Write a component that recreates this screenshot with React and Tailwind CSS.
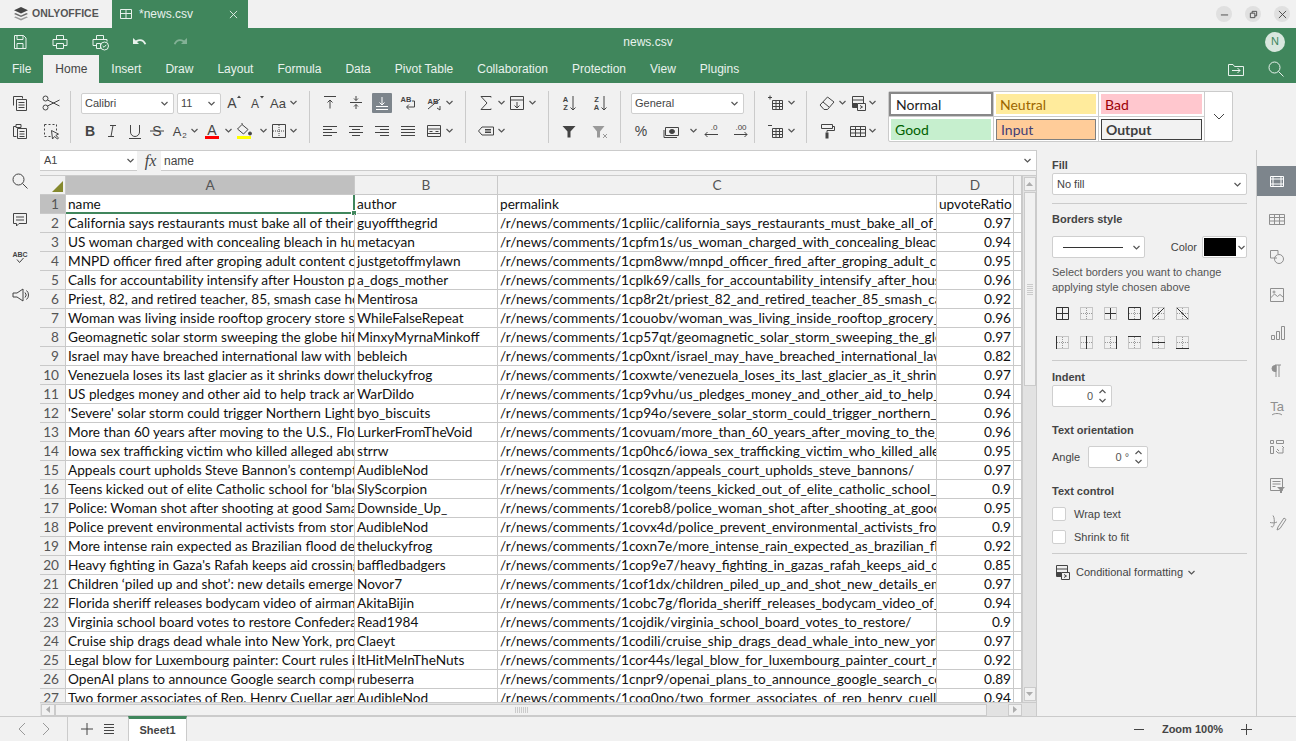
import React from "react";

const SANS = "font-['Liberation_Sans',Arial,sans-serif]";
const CELL = "font-['Lato',sans-serif]";

const tabs = ["File", "Home", "Insert", "Draw", "Layout", "Formula", "Data", "Pivot Table", "Collaboration", "Protection", "View", "Plugins"];

const rows = [
  ["name", "author", "permalink", "upvoteRatio"],
  ["California says restaurants must bake all of their bread", "guyoffthegrid", "/r/news/comments/1cpliic/california_says_restaurants_must_bake_all_of_their", "0.97"],
  ["US woman charged with concealing bleach in husband's", "metacyan", "/r/news/comments/1cpfm1s/us_woman_charged_with_concealing_bleach_in", "0.94"],
  ["MNPD officer fired after groping adult content creator", "justgetoffmylawn", "/r/news/comments/1cpm8ww/mnpd_officer_fired_after_groping_adult_content", "0.95"],
  ["Calls for accountability intensify after Houston police", "a_dogs_mother", "/r/news/comments/1cplk69/calls_for_accountability_intensify_after_houston", "0.96"],
  ["Priest, 82, and retired teacher, 85, smash case holding", "Mentirosa", "/r/news/comments/1cp8r2t/priest_82_and_retired_teacher_85_smash_case", "0.92"],
  ["Woman was living inside rooftop grocery store sign", "WhileFalseRepeat", "/r/news/comments/1couobv/woman_was_living_inside_rooftop_grocery_store", "0.96"],
  ["Geomagnetic solar storm sweeping the globe hits", "MinxyMyrnaMinkoff", "/r/news/comments/1cp57qt/geomagnetic_solar_storm_sweeping_the_globe", "0.97"],
  ["Israel may have breached international law with", "bebleich", "/r/news/comments/1cp0xnt/israel_may_have_breached_international_law", "0.82"],
  ["Venezuela loses its last glacier as it shrinks down", "theluckyfrog", "/r/news/comments/1coxwte/venezuela_loses_its_last_glacier_as_it_shrinks", "0.97"],
  ["US pledges money and other aid to help track and", "WarDildo", "/r/news/comments/1cp9vhu/us_pledges_money_and_other_aid_to_help_track", "0.94"],
  ["'Severe' solar storm could trigger Northern Lights", "byo_biscuits", "/r/news/comments/1cp94o/severe_solar_storm_could_trigger_northern_lights", "0.96"],
  ["More than 60 years after moving to the U.S., Florida", "LurkerFromTheVoid", "/r/news/comments/1covuam/more_than_60_years_after_moving_to_the_us", "0.96"],
  ["Iowa sex trafficking victim who killed alleged abuser", "strrw", "/r/news/comments/1cp0hc6/iowa_sex_trafficking_victim_who_killed_alleged", "0.95"],
  ["Appeals court upholds Steve Bannon’s contempt", "AudibleNod", "/r/news/comments/1cosqzn/appeals_court_upholds_steve_bannons/", "0.97"],
  ["Teens kicked out of elite Catholic school for ‘black", "SlyScorpion", "/r/news/comments/1colgom/teens_kicked_out_of_elite_catholic_school_for", "0.9"],
  ["Police: Woman shot after shooting at good Samaritan", "Downside_Up_", "/r/news/comments/1coreb8/police_woman_shot_after_shooting_at_good", "0.95"],
  ["Police prevent environmental activists from storming", "AudibleNod", "/r/news/comments/1covx4d/police_prevent_environmental_activists_from", "0.9"],
  ["More intense rain expected as Brazilian flood death", "theluckyfrog", "/r/news/comments/1coxn7e/more_intense_rain_expected_as_brazilian_flood", "0.92"],
  ["Heavy fighting in Gaza's Rafah keeps aid crossing", "baffledbadgers", "/r/news/comments/1cop9e7/heavy_fighting_in_gazas_rafah_keeps_aid_crossing", "0.85"],
  ["Children ‘piled up and shot’: new details emerge", "Novor7", "/r/news/comments/1cof1dx/children_piled_up_and_shot_new_details_emerge", "0.97"],
  ["Florida sheriff releases bodycam video of airman", "AkitaBijin", "/r/news/comments/1cobc7g/florida_sheriff_releases_bodycam_video_of_airman", "0.94"],
  ["Virginia school board votes to restore Confederate", "Read1984", "/r/news/comments/1cojdik/virginia_school_board_votes_to_restore/", "0.9"],
  ["Cruise ship drags dead whale into New York, probe", "Claeyt", "/r/news/comments/1codili/cruise_ship_drags_dead_whale_into_new_york", "0.97"],
  ["Legal blow for Luxembourg painter: Court rules in", "ItHitMeInTheNuts", "/r/news/comments/1cor44s/legal_blow_for_luxembourg_painter_court_rules", "0.92"],
  ["OpenAI plans to announce Google search competitor", "rubeserra", "/r/news/comments/1cnpr9/openai_plans_to_announce_google_search_competitor", "0.89"],
  ["Two former associates of Rep. Henry Cuellar agree", "AudibleNod", "/r/news/comments/1coq0no/two_former_associates_of_rep_henry_cuellar", "0.94"],
];

function Ic({ children, className = "" }) {
  return (
    <svg viewBox="0 0 20 20" fill="none" stroke="currentColor" strokeWidth="1" className={"w-5 h-5 shrink-0 " + className}>
      {children}
    </svg>
  );
}

function Chev({ className = "" }) {
  return (
    <svg viewBox="0 0 7 5" fill="none" stroke="currentColor" strokeWidth="1.2" className={"w-[7px] h-[5px] shrink-0 text-[#555] " + className}>
      <path d="M.5 1l3 3 3-3" />
    </svg>
  );
}

// fixed-width toolbar slot, icon centred in it
function S({ w, children }) {
  return <div className={"flex h-5 items-center justify-center shrink-0 " + w}>{children}</div>;
}

function IconText({ x = 10, y = 14, size = 11, weight = "400", children, fill = "currentColor" }) {
  return (
    <text x={x} y={y} fontSize={size} fontWeight={weight} textAnchor="middle" fill={fill} stroke="none" fontFamily="Liberation Sans, Arial, sans-serif">
      {children}
    </text>
  );
}

function Lines({ kind }) {
  const d = {
    top: "M4 3.500h12M10 15.500V7M7.500 9.500L10 7l2.500 2.500",
    mid: "M4 9.500h12M10 3v4.500M8 5.500l2 2 2-2M10 16v-4.500M8 13.500l2-2 2 2",
    left: "M3 5.500h14M3 8.500h9M3 11.500h14M3 14.500h9",
    center: "M3 5.500h14M6 8.500h8M3 11.500h14M6 14.500h8",
    right: "M3 5.500h14M8 8.500h9M3 11.500h14M8 14.500h9",
    just: "M3 5.500h14M3 8.500h14M3 11.500h14M3 14.500h14",
  }[kind];
  return (
    <Ic>
      <path d={d} />
    </Ic>
  );
}

function Sep() {
  return <div className="w-px h-[52px] bg-[#cbcbcb] self-center shrink-0" />;
}

function Combo({ className, text, chevClass = "" }) {
  return (
    <div className={"flex items-center justify-between bg-white border border-[#cfcfcf] rounded-[2px] text-[11px] text-[#444] pl-[3px] pr-[5px] shrink-0 " + className}>
      <span>{text}</span>
      <Chev className={chevClass} />
    </div>
  );
}

function Row({ className = "", children }) {
  return <div className={"flex items-center h-5 " + className}>{children}</div>;
}

function Group({ w, children }) {
  return <div className={"flex flex-col justify-between h-[48px] shrink-0 self-center " + w}>{children}</div>;
}

function TitleBar() {
  return (
    <div className={"flex h-7 bg-[#f1f1f1] shrink-0 " + SANS}>
      <div className="flex items-center w-[112px] pl-[13px] gap-[3px] text-[#555]">
        <svg viewBox="0 0 16 16" className="w-4 h-4">
          <path d="M8 1l7 3.200L8 7.400 1 4.200z" fill="#444" />
          <path d="M2.600 7L8 9.500 13.400 7 15 7.900 8 11 1 7.900z" fill="#6d6d6d" />
          <path d="M2.600 10.400L8 12.800l5.400-2.400 1.600.9L8 14.500l-7-3.200z" fill="#9a9a9a" />
        </svg>
        <span className="text-[10.5px] font-bold text-[#555]">ONLYOFFICE</span>
      </div>
      <div className="flex items-center w-[136px] bg-[#40865c] text-[#e8f1ec]">
        <svg viewBox="0 0 12 10" fill="none" stroke="currentColor" className="w-3 h-[10px] ml-[8px]">
          <path d="M.5.500h11v9H.5zM.5 4.500h11M6 .5v9" />
        </svg>
        <span className="text-[12px] ml-[7px]">*news.csv</span>
        <svg viewBox="0 0 10 10" fill="none" stroke="currentColor" className="w-[9px] h-[9px] ml-[36px]">
          <path d="M1 1l8 8M9 1l-8 8" />
        </svg>
      </div>
      <div className="flex flex-1 items-center justify-end gap-[13px] pr-[6px]">
        {["min", "max", "close"].map((k) => (
          <div key={k} className="flex items-center justify-center w-4 h-4 rounded-full bg-[#e0e0e0] text-[#444]">
            <svg viewBox="0 0 10 10" fill="none" stroke="currentColor" className="w-[9px] h-[9px]">
              {k === "min" && <path d="M1 5.500h8" />}
              {k === "max" && <path d="M1.500 3.500h5v5h-5zM3.500 3.500v-2h5v5h-2" />}
              {k === "close" && <path d="M1 1l8 8M9 1l-8 8" />}
            </svg>
          </div>
        ))}
      </div>
    </div>
  );
}

function GreenHeader() {
  return (
    <div className={"h-[55px] bg-[#40865c] shrink-0 text-white " + SANS}>
      <div className="grid grid-cols-[1fr_auto_1fr] items-center h-[27px]">
        <div className="flex text-[#e9f2ed]">
          <S w="w-10">
            <Ic><path d="M4.500 3.500h9l2.500 2.500v10.500H4.500zM7 3.500v4h6v-4M7 16.500v-5h6v5" /></Ic>
          </S>
          <S w="w-10">
            <Ic><path d="M6.500 7V3.500h7V7M6.500 13.500H3V7.500h14v6h-3.500M6.500 11.500h7v5h-7z" /></Ic>
          </S>
          <S w="w-10">
            <Ic>
              <path d="M6.500 7V3.500h7V7M6.500 13.500H3V7.500h14v2M6.500 11.500h4v5h-4z" />
              <circle cx="14.500" cy="14" r="4" />
              <path d="M12.700 14l1.300 1.300 2.300-2.500" />
            </Ic>
          </S>
          <S w="w-10">
            <Ic><path d="M3 6v6h6L7 10c2.800-1.800 6-1 7.500 2.500l1.700-.6C14.500 7.200 10.200 5.800 5.800 8.500z" fill="currentColor" stroke="none" /></Ic>
          </S>
          <S w="w-10">
            <Ic className="opacity-40"><path d="M17 6v6h-6l2-2c-2.800-1.800-6-1-7.500 2.500l-1.700-.6C5.500 7.200 9.800 5.800 14.200 8.500z" fill="currentColor" stroke="none" /></Ic>
          </S>
        </div>
        <div className="text-[12px] text-[#e9f2ed]">news.csv</div>
        <div className="flex justify-end pr-[11px]">
          <div className="flex items-center justify-center w-5 h-5 rounded-full bg-[#d9e7de] text-[#40865c] text-[11px]">N</div>
        </div>
      </div>
      <div className="flex h-7 items-end">
        {tabs.map((t) =>
          t === "Home" ? (
            <div key={t} className="flex items-center h-[28px] px-3 bg-[#f1f1f1] text-[#444] text-[12px]">{t}</div>
          ) : (
            <div key={t} className="flex items-center h-[28px] px-3 text-[#e9f2ed] text-[12px]">{t}</div>
          )
        )}
        <div className="flex flex-1 justify-end items-center h-[28px] text-[#e9f2ed]">
          <S w="w-10">
            <Ic><path d="M2.500 5.500v11h15v-9h-9L7 5.500zM6 11.500h8M11.500 9l2.500 2.500-2.500 2.500" /></Ic>
          </S>
          <S w="w-10">
            <Ic><circle cx="8.500" cy="8.500" r="5.500" /><path d="M12.500 12.500l5 5" /></Ic>
          </S>
        </div>
      </div>
    </div>
  );
}

function Ribbon() {
  return (
    <div className={"flex h-[67px] bg-[#f1f1f1] shrink-0 text-[#444] " + SANS}>
      <Group w="w-[70px] pl-[10px]">
        <Row>
          <S w="w-5"><Ic><path d="M3.500 12.500v-9h9v2M6.500 6.500h10v11h-10zM8.500 9.500h6M8.500 12h6M8.500 14.500h6" /></Ic></S>
          <S w="w-[42px]"><Ic><circle cx="4.500" cy="5.500" r="2.500" /><circle cx="4.500" cy="14.500" r="2.500" /><path d="M6.500 7l12 6M6.500 13l12-6" /></Ic></S>
        </Row>
        <Row>
          <S w="w-5"><Ic><path d="M6 5.500H3.500v10h3M6 3.500h5v3H6zM7.500 7.500h9v10h-9zM9.500 10.500h5M9.500 13h5M9.500 15.500h5" /></Ic></S>
          <S w="w-[42px]"><Ic><path d="M3.500 3.500h12v6M3.500 3.500v12h6" strokeDasharray="2 2" /><path d="M10.500 9.500l1 8.500 2-2.500 3 2.500 1-1.200-2.700-2.400 2.700-1.300z" /></Ic></S>
        </Row>
      </Group>
      <Sep />
      <Group w="w-[238px] pl-[10px]">
        <Row>
          <Combo className="w-[93px] h-[21px] mt-[1px] pt-[1px]" text="Calibri" />
          <Combo className="w-[44px] h-[21px] mt-[1px] pt-[1px] ml-[3px]" text="11" />
          <S w="w-[23px]"><Ic><IconText x="9" y="15" size="14">A</IconText><path d="M14 5l2-2.500L18 5z" fill="currentColor" stroke="none" /></Ic></S>
          <S w="w-[23px]"><Ic><IconText x="9" y="15" size="12">A</IconText><path d="M14 3l2 2.500L18 3z" fill="currentColor" stroke="none" /></Ic></S>
          <S w="w-[22px]"><Ic><IconText x="10" y="15" size="13">Aa</IconText></Ic></S>
          <S w="w-[8px]"><Chev /></S>
        </Row>
        <Row>
          <S w="w-[18px]"><Ic><IconText x="10" y="15" size="14" weight="700">B</IconText></Ic></S>
          <S w="w-[26px]"><Ic><path d="M8 4.500h6M6 15.500h6M11 4.500l-2 11" /></Ic></S>
          <S w="w-[20px]"><Ic><path d="M5.500 4v7a4.500 4.500 0 0 0 9 0V4M4 17.500h12" /></Ic></S>
          <S w="w-[24px]"><Ic><IconText x="10" y="15" size="14">S</IconText><path d="M3 10h14" /></Ic></S>
          <S w="w-[20px]"><Ic><IconText x="8" y="15" size="13">A</IconText><IconText x="15.500" y="16.500" size="8">2</IconText></Ic></S>
          <S w="w-[11px]"><Chev /></S>
          <S w="w-[24px]">
            <svg viewBox="0 0 20 20" className="w-5 h-5 shrink-0">
              <IconText x="10" y="14" size="14">A</IconText>
              <rect x="3" y="15" width="14" height="3" fill="#f00" />
            </svg>
          </S>
          <S w="w-[8px]"><Chev /></S>
          <S w="w-[24px]">
            <svg viewBox="0 0 20 20" className="w-5 h-5 shrink-0" fill="none" stroke="currentColor">
              <path d="M8 3.500l6 5-4.500 4.500-6-5zM8 3.500V2" />
              <circle cx="16" cy="12.500" r="1.500" fill="currentColor" />
              <rect x="3" y="15" width="14" height="3" fill="#ff0" stroke="none" />
            </svg>
          </S>
          <S w="w-[14px]"><Chev /></S>
          <S w="w-[18px]"><Ic><path d="M3.500 3.500h13v13h-13z" /><path d="M10 4v12M4 10h12" strokeDasharray="1 1" /></Ic></S>
          <S w="w-[9px] ml-[1px]"><Chev /></S>
        </Row>
      </Group>
      <Sep />
      <Group w="w-[155px] pl-[10px]">
        <Row>
          <S w="w-5"><Lines kind="top" /></S>
          <S w="w-[32px]"><Lines kind="mid" /></S>
          <S w="w-[20px]">
            <div className="flex items-center justify-center w-5 h-5 bg-[#7d858c] text-white rounded-[1px]"><Ic><path d="M4 13.500h12M4 16.500h12M10 4v8M7.500 9.500l2.500 2.500 2.500-2.500" /></Ic></div>
          </S>
          <S w="w-[32px]"><Ic><IconText x="8" y="9" size="7.500" weight="700">AB</IconText><path d="M14 8h2.500v6H9M11 11.500L8.500 14l2.500 2.500" /></Ic></S>
          <S w="w-[20px]"><Ic><IconText x="9" y="11" size="7.500" weight="700">AB</IconText><path d="M4 16L16 6M13 15l3 2 0-4" /></Ic></S>
          <S w="w-[10px]"><Chev /></S>
        </Row>
        <Row>
          <S w="w-5"><Lines kind="left" /></S>
          <S w="w-[32px]"><Lines kind="center" /></S>
          <S w="w-[20px]"><Lines kind="right" /></S>
          <S w="w-[32px]"><Lines kind="just" /></S>
          <S w="w-[20px]"><Ic><path d="M3.500 4.500h13v11h-13zM3.500 8h13M3.500 12.500h13M5.500 10.500h3M11.500 10.500h3" /></Ic></S>
          <S w="w-[10px]"><Chev /></S>
        </Row>
      </Group>
      <Sep />
      <Group w="w-[82px] pl-[10px]">
        <Row>
          <S w="w-5"><Ic><path d="M15 4.500v-1H5l6 6.500-6 6.500h10v-1" /></Ic></S>
          <S w="w-[10px]"><Chev /></S>
          <S w="w-[22px]"><Ic><path d="M3.500 3.500h13v13h-13zM3.500 7h13M10 9v6M7.500 12.500l2.500 2.500 2.500-2.500" /></Ic></S>
          <S w="w-[8px]"><Chev /></S>
        </Row>
        <Row>
          <S w="w-5"><Ic><path d="M2.500 10L6 6h11.500v8H6zM9 8.500h6M9 10h6M9 11.500h6" /></Ic></S>
          <S w="w-[10px]"><Chev /></S>
        </Row>
      </Group>
      <Sep />
      <Group w="w-[71px] pl-[10px]">
        <Row>
          <S w="w-5"><Ic><IconText x="6.500" y="9" size="7.500" weight="700">A</IconText><IconText x="6.500" y="17" size="7.500" weight="700">Z</IconText><path d="M14 3v14M11.500 14.500L14 17l2.500-2.500" /></Ic></S>
          <S w="w-[42px]"><Ic><IconText x="6.500" y="9" size="7.500" weight="700">Z</IconText><IconText x="6.500" y="17" size="7.500" weight="700">A</IconText><path d="M14 3v14M11.500 14.500L14 17l2.500-2.500" /></Ic></S>
        </Row>
        <Row>
          <S w="w-5"><Ic><path d="M3.500 5h13l-5 5.500v6h-3v-6z" fill="currentColor" stroke="none" /></Ic></S>
          <S w="w-[42px]"><Ic className="text-[#9a9a9a]"><path d="M2.500 5h12L10 10.500v6H7v-6z" fill="currentColor" stroke="none" /><path d="M13 13l4 4M17 13l-4 4" /></Ic></S>
        </Row>
      </Group>
      <Sep />
      <Group w="w-[133px] pl-[10px]">
        <Row><Combo className="w-[113px] h-[21px] mt-[1px] pt-[1px]" text="General" /></Row>
        <Row>
          <S w="w-[20px]"><Ic><IconText x="10" y="15" size="14">%</IconText></Ic></S>
          <S w="w-[41px]"><Ic><path d="M3.500 6.500h13v8h-13zM2 9v7.500h13" /><ellipse cx="10" cy="10.500" rx="2.500" ry="2" fill="currentColor" /></Ic></S>
          <S w="w-[2px]"><Chev /></S>
          <S w="w-[31px] ml-[1px]"><Ic><IconText x="13" y="9" size="8">.0</IconText><path d="M17 13.500H4M6.500 11L4 13.500 6.500 16" /></Ic></S>
          <S w="w-[30px]"><Ic><IconText x="10" y="9" size="8">.00</IconText><path d="M3 13.500h13M13.500 11l2.500 2.500-2.500 2.500" /></Ic></S>
        </Row>
      </Group>
      <Sep />
      <Group w="w-[51px] pl-[11px]">
        <Row>
          <S w="w-5"><Ic><path d="M6.500 7.500h10v9h-10zM6.500 10.500h10M6.500 13.500h10M10 7.500v9M13.500 7.500v9M2 4.500h4M4 2.500v4" /></Ic></S>
          <S w="w-[10px]"><Chev /></S>
        </Row>
        <Row>
          <S w="w-5"><Ic><path d="M6.500 7.500h10v9h-10zM6.500 10.500h10M6.500 13.500h10M10 7.500v9M13.500 7.500v9M2 4.500h4" /></Ic></S>
          <S w="w-[10px]"><Chev /></S>
        </Row>
      </Group>
      <Sep />
      <Group w="w-[82px] pl-[10px]">
        <Row>
          <S w="w-5"><Ic><path d="M3 12l7.500-8 6.500 5-6.500 7.500H7zM6 9l6 5" /></Ic></S>
          <S w="w-[10px]"><Chev /></S>
          <S w="w-[21px]"><Ic><path d="M4.500 3.500h11v11h-11zM4.500 7h11M4.500 10.500h5" /><rect x="5" y="11" width="5" height="3" fill="currentColor" stroke="none" /><path d="M9.500 10.500h8v7h-8zM12 12.500l2.500 1.500-2.500 1.500" fill="#f1f1f1" /></Ic></S>
          <S w="w-[9px]"><Chev /></S>
        </Row>
        <Row>
          <S w="w-5"><Ic><path d="M4.500 3.500h11v4h-11zM15.500 5.500h2v4H10v2" /><rect x="8.500" y="11.500" width="3" height="6" fill="currentColor" stroke="none" /></Ic></S>
          <div className="w-[10px] shrink-0" />
          <S w="w-[21px]"><Ic><path d="M2.500 5.500h15v10h-15zM2.500 8.500h15M2.500 12h15M7.500 5.500v10M12.500 5.500v10" /></Ic></S>
          <S w="w-[9px]"><Chev /></S>
        </Row>
      </Group>
      <StyleGallery />
    </div>
  );
}

function StyleGallery() {
  const base = "flex items-center pl-[4px] text-[14px] " + CELL;
  return (
    <div className="flex self-center ml-[-1px] h-[51px] w-[345px] bg-white border border-[#cbcbcb] rounded-[2px] shrink-0">
      <div className="grid grid-cols-[105px_105px_105px] grid-rows-[25px_25px] border-r border-[#cbcbcb]">
        <div className="border-r border-b border-[#cbcbcb]"><div className={"h-full border-2 border-[#888] text-[#222] pl-[5px] " + base}>Normal</div></div>
        <div className="border-r border-b border-[#cbcbcb] p-[2px]"><div className={"h-full bg-[#ffeb9c] text-[#9c6500] " + base}>Neutral</div></div>
        <div className="border-b border-[#cbcbcb] p-[2px]"><div className={"h-full bg-[#ffc7ce] text-[#9c0006] " + base}>Bad</div></div>
        <div className="border-r border-[#cbcbcb] p-[2px]"><div className={"h-full bg-[#c6efce] text-[#006100] " + base}>Good</div></div>
        <div className="border-r border-[#cbcbcb] p-[2px]"><div className={"h-full bg-[#ffcc99] border border-[#7f7f7f] text-[#3f3f76] " + base}>Input</div></div>
        <div className="p-[2px]"><div className={"h-full bg-[#f2f2f2] border border-[#3f3f3f] text-[#3f3f3f] font-bold " + base}>Output</div></div>
      </div>
      <div className="flex flex-1 items-center justify-center text-[#444]">
        <svg viewBox="0 0 12 7" fill="none" stroke="currentColor" className="w-3 h-[7px]"><path d="M1 1l5 5 5-5" /></svg>
      </div>
    </div>
  );
}

function LeftBar() {
  return (
    <div className="flex flex-col items-center w-10 pt-[21px] gap-[18px] bg-[#f1f1f1] text-[#444] shrink-0">
      <Ic><circle cx="8.500" cy="8.500" r="5.500" /><path d="M12.500 12.500l5 5" /></Ic>
      <Ic><path d="M3.500 4.500h13v10H9L6.500 17v-2.500h-3zM6 8h8M6 11h8" /></Ic>
      <Ic><IconText x="10" y="10" size="7" weight="700">ABC</IconText><path d="M7 12.500l2.500 3 4-4.500" /></Ic>
      <Ic><path d="M3 8h4l6-4v12l-6-4H3zM15 7.500a3.500 3.500 0 0 1 0 5M16.500 5.500a6 6 0 0 1 0 9" /></Ic>
    </div>
  );
}

function FormulaBar() {
  return (
    <div className={"flex h-[21px] bg-[#f1f1f1] border-t border-[#cbcbcb] shrink-0 " + SANS}>
      <div className="flex items-center justify-between w-[97px] bg-white border-b border-[#cbcbcb] pl-[4px] pr-[3px] text-[11px] text-[#444]">
        <span>A1</span>
        <Chev />
      </div>
      <div className="flex items-center justify-center w-[21px] ml-[3px] font-['Liberation_Serif',serif] italic text-[16px] text-[#444]">fx</div>
      <div className="flex flex-1 items-center justify-between bg-white border-b border-[#cbcbcb] pl-[3px] pr-[5px] text-[11px] text-[#444]">
        <span className="text-[12px]">name</span>
        <Chev />
      </div>
    </div>
  );
}

function Grid() {
  const cols = [
    { label: "A", w: "w-[289px]", active: true },
    { label: "B", w: "w-[143px]" },
    { label: "C", w: "w-[439px]" },
    { label: "D", w: "w-[77px]" },
    { label: "", w: "w-[8px]" },
  ];
  const border = "border-r border-b border-[#c9c9c9]";
  return (
    <div className={"flex-1 min-w-0 overflow-hidden bg-white text-[13.65px] text-[#111] " + CELL}>
      <div className="flex h-[19px]">
        <div className={"flex items-end justify-end w-[26px] pr-[2px] pb-[2px] bg-[#f1f1f1] shrink-0 " + border}>
          <svg viewBox="0 0 11 11" className="w-[11px] h-[11px]"><path d="M11 0v11H0z" fill="#85892e" /></svg>
        </div>
        {cols.map((c) => (
          <div key={c.label} className={"flex items-center justify-center shrink-0 text-[#555] " + c.w + " " + border + " " + (c.active ? "bg-[#c0c0c0]" : "bg-[#f1f1f1]")}>
            {c.label}
          </div>
        ))}
      </div>
      {rows.map((r, i) => (
        <div key={i} className="flex h-[19px]">
          <div className={"flex items-center justify-end w-[26px] pr-[6px] shrink-0 text-[#555] " + border + " " + (i === 0 ? "bg-[#c0c0c0]" : "bg-[#f1f1f1]")}>
            {i + 1}
          </div>
          <div className={"relative w-[289px] shrink-0 " + (i === 0 ? "border-r-2 border-b-2 border-[#40865c]" : border)}>
            <div className="h-full overflow-hidden whitespace-nowrap pl-[2px] leading-[18px]">{r[0]}</div>
            {i === 0 && <div className="absolute right-[-4px] bottom-[-4px] w-[6px] h-[6px] bg-[#40865c] border border-white" />}
          </div>
          <div className={"w-[143px] shrink-0 overflow-hidden whitespace-nowrap pl-[2px] leading-[18px] " + border}>{r[1]}</div>
          <div className={"w-[439px] shrink-0 overflow-hidden whitespace-nowrap pl-[2px] leading-[18px] " + border}>{r[2]}</div>
          <div className={"w-[77px] shrink-0 overflow-hidden whitespace-nowrap px-[2px] leading-[18px] " + (i > 0 ? "text-right " : "") + border}>{r[3]}</div>
          <div className={"w-[8px] shrink-0 " + border} />
        </div>
      ))}
    </div>
  );
}

function ScrollV() {
  return (
    <div className="flex flex-col items-center w-[14px] shrink-0 bg-[#e2e2e2] border-l border-[#cbcbcb]">
      <div className="flex items-center justify-center w-[12px] h-[14px] border border-[#cbcbcb] bg-[#f1f1f1] mt-[1px]">
        <svg viewBox="0 0 7 4" className="w-[7px] h-1"><path d="M3.500 0L7 4H0z" fill="#adadad" /></svg>
      </div>
      <div className="flex flex-col items-center justify-center gap-[1px] w-[12px] h-[194px] mt-[1px] border border-[#cbcbcb] bg-[#f1f1f1]">
        {[0, 1, 2, 3, 4, 5].map((i) => <div key={i} className="w-[6px] h-px bg-[#cbcbcb]" />)}
      </div>
      <div className="flex-1" />
      <div className="flex items-center justify-center w-[12px] h-[14px] border border-[#cbcbcb] bg-[#f1f1f1] mb-[1px]">
        <svg viewBox="0 0 7 4" className="w-[7px] h-1"><path d="M3.500 4L7 0H0z" fill="#adadad" /></svg>
      </div>
    </div>
  );
}

function ScrollH() {
  return (
    <div className="flex items-center h-[14px] bg-[#e2e2e2] border-t border-[#cbcbcb] shrink-0 pl-[1px]">
      <div className="flex items-center justify-center w-[14px] h-[12px] border border-[#cbcbcb] bg-[#f1f1f1]">
        <svg viewBox="0 0 4 7" className="w-1 h-[7px]"><path d="M0 3.500L4 0v7z" fill="#adadad" /></svg>
      </div>
      <div className="flex items-center justify-center gap-[1px] w-[932px] h-[12px] border border-[#cbcbcb] bg-[#f1f1f1]">
        {[0, 1, 2, 3, 4, 5, 6].map((i) => <div key={i} className="w-px h-[6px] bg-[#cbcbcb]" />)}
      </div>
      <div className="flex-1" />
      <div className="flex items-center justify-center w-[14px] h-[12px] mr-[14px] border border-[#cbcbcb] bg-[#f1f1f1]">
        <svg viewBox="0 0 4 7" className="w-1 h-[7px]"><path d="M4 3.500L0 0v7z" fill="#adadad" /></svg>
      </div>
    </div>
  );
}

// small 13px border picker: dotted grid with the solid sides drawn over it
function BorderIcon({ solid }) {
  return (
    <svg viewBox="0 0 13 13" fill="none" className="w-[13px] h-[13px] shrink-0">
      <path d="M.5.500h12v12H.5zM6.500 1v11M1 6.500h11" stroke="#9a9a9a" strokeDasharray="1 1" />
      <path d={solid} stroke="#333" />
    </svg>
  );
}

const borderIcons = [
  ["M.5.500h12v12H.5zM6.500 1v11M1 6.500h11", "", "M6.500 1v11M1 6.500h11", "M.5.500h12v12H.5z", "M1 12L12 1", "M1 1l11 11"],
  ["M.5 0v13", "M6.500 0v13", "M12.500 0v13", "M0 .5h13", "M0 6.500h13", "M0 12.500h13"],
];

function Divider({ className = "" }) {
  return <div className={"h-px bg-[#cbcbcb] " + className} />;
}

function Spin({ w, value }) {
  return (
    <div className={"flex items-center justify-end bg-white border border-[#cfcfcf] rounded-[2px] h-[22px] text-[11px] text-[#555] pr-[5px] gap-[6px] " + w}>
      <span>{value}</span>
      <div className="flex flex-col gap-[4px]">
        <Chev className="rotate-180" />
        <Chev />
      </div>
    </div>
  );
}

function RightPanel() {
  return (
    <div className={"w-[220px] shrink-0 bg-[#f1f1f1] border-l border-[#cbcbcb] pl-[15px] pr-[9px] text-[11px] text-[#444] " + SANS}>
      <div className="mt-[8px] h-[14px] leading-[14px] font-bold">Fill</div>
      <Combo className="h-[22px] mt-[1px] pl-[4px]" text="No fill" />
      <Divider className="mt-[8px]" />
      <div className="mt-[8px] h-[14px] leading-[14px] font-bold">Borders style</div>
      <div className="flex items-center justify-between mt-[10px]">
        <div className="flex items-center w-[93px] h-[22px] bg-white border border-[#cfcfcf] rounded-[2px] pl-[10px] gap-[10px]">
          <div className="w-[60px] h-px bg-[#333]" />
          <Chev />
        </div>
        <div className="flex items-center gap-[5px]">
          <span>Color</span>
          <div className="flex items-center w-[45px] h-[22px] bg-white border border-[#cfcfcf] rounded-[2px] pl-[1px] gap-[2px]">
            <div className="w-[32px] h-[18px] bg-black" />
            <Chev />
          </div>
        </div>
      </div>
      <p className="mt-[7px] leading-[15px] text-[#555]">
        Select borders you want to change
        <br />
        applying style chosen above
      </p>
      {borderIcons.map((line, i) => (
        <div key={i} className={"flex gap-[11px] pl-[4px] " + (i === 0 ? "mt-[12px]" : "mt-[16px]")}>
          {line.map((d, j) => <BorderIcon key={j} solid={d} />)}
        </div>
      ))}
      <Divider className="mt-[11px]" />
      <div className="mt-[9px] h-[14px] leading-[14px] font-bold">Indent</div>
      <Spin w="w-[60px] mt-[1px]" value="0" />
      <div className="mt-[16px] h-[14px] leading-[14px] font-bold">Text orientation</div>
      <div className="flex items-center mt-[9px] gap-[8px]">
        <span>Angle</span>
        <Spin w="w-[60px]" value="0 °" />
      </div>
      <div className="mt-[16px] h-[14px] leading-[14px] font-bold">Text control</div>
      <div className="flex items-center h-[14px] mt-[9px] gap-[8px]">
        <div className="w-[14px] h-[14px] bg-white border border-[#cfcfcf] rounded-[2px]" />
        <span>Wrap text</span>
      </div>
      <div className="flex items-center h-[14px] mt-[9px] gap-[8px]">
        <div className="w-[14px] h-[14px] bg-white border border-[#cfcfcf] rounded-[2px]" />
        <span>Shrink to fit</span>
      </div>
      <Divider className="mt-[9px]" />
      <div className="flex items-center mt-[8px] gap-[4px]">
        <Ic><path d="M4.500 3.500h11v11h-11zM4.500 7h11M4.500 10.500h5" /><rect x="5" y="11" width="5" height="3" fill="currentColor" stroke="none" /><path d="M9.500 10.500h8v7h-8zM12 12.500l2.500 1.500-2.500 1.500" fill="#f1f1f1" /></Ic>
        <span>Conditional formatting</span>
        <Chev className="ml-[1px]" />
      </div>
    </div>
  );
}

function IconBar() {
  const icons = [
    <><path d="M3.500 5.500h13v10h-13zM3.500 8h13M3.500 13h13M6 5.500v10M14 5.500v10" /></>,
    <><path d="M2.500 5.500h15v10h-15zM2.500 8.500h15M2.500 12h15M7.500 5.500v10M12.500 5.500v10" /></>,
    <><path d="M10 11H3.500V3.500H11V7" /><circle cx="12" cy="12" r="4.500" /></>,
    <><path d="M3.500 3.500h13v13h-13zM3.500 13l4-4 3 2.500 2.500-2 3 2.500" /><circle cx="7" cy="7" r="1" /></>,
    <><path d="M4.500 12.500h3v4h-3zM9.500 8.500h3v8h-3zM14.500 3.500h3v13h-3z" /></>,
    <><path d="M9 4v12M12 4v12M8 4h6" fill="none" /><path d="M9 4.500H8a3 3 0 0 0 0 6h1z" fill="currentColor" /></>,
    <><IconText x="10" y="12" size="13">Ta</IconText><path d="M5 16c2-2 8-2 10 0" /></>,
    <><path d="M3.500 3.500h3v3h-3zM9.500 3.500h7v3h-7zM3.500 9.500h3v7h-3zM9 14l2 2h5v-5M10 12l2 2M17 11l-2-2" /></>,
    <><path d="M3.500 3.500h12v12H9M3.500 3.500v12H9M5.500 6.500h8M5.500 9h8M5.500 11.500h3" /><path d="M10 12h8l-3 3v3h-2v-3z" fill="currentColor" stroke="none" /></>,
    <><path d="M6 2.500c1.500 2 1.500 6 1 9-.5 3-2.500 3-3 1.500M3 9.500c2 .5 5 .5 7-.5M10 17l1-3 6-9 2 1.500-6 9z" /></>,
  ];
  return (
    <div className="flex flex-col flex-1 pt-[16px] bg-[#f1f1f1] border-l border-[#cbcbcb]">
      {icons.map((icon, i) => (
        <div key={i} className={"flex items-center justify-center shrink-0 " + (i === 0 ? "h-[30px] bg-[#7d858c] text-white mb-[4px]" : "h-[38px] text-[#8f8f8f]")}>
          <Ic>{icon}</Ic>
        </div>
      ))}
    </div>
  );
}

function StatusBar() {
  return (
    <div className={"flex h-[25px] bg-[#f1f1f1] border-t border-[#cbcbcb] shrink-0 text-[#444] " + SANS}>
      <div className="flex items-center w-[68px] pl-[18px] gap-[16px] text-[#999] border-r border-[#cbcbcb]">
        <svg viewBox="0 0 8 14" fill="none" stroke="currentColor" className="w-2 h-[14px]"><path d="M7 1L1 7l6 6" /></svg>
        <svg viewBox="0 0 8 14" fill="none" stroke="currentColor" className="w-2 h-[14px]"><path d="M1 1l6 6-6 6" /></svg>
      </div>
      <div className="flex items-center w-[60px] pl-[13px] gap-[10px]">
        <svg viewBox="0 0 12 12" fill="none" stroke="currentColor" className="w-3 h-3"><path d="M6 0v12M0 6h12" /></svg>
        <svg viewBox="0 0 12 10" fill="none" stroke="currentColor" className="w-3 h-[10px]"><path d="M1 .5h10M1 3.500h10M1 6.500h10M1 9.500h10" /></svg>
      </div>
      <div className="flex items-center justify-center w-[59px] bg-white border-t-[3px] border-t-[#40865c] border-x border-x-[#cbcbcb] mt-[-1px] text-[11px] font-bold">Sheet1</div>
      <div className="flex flex-1 items-center justify-end pr-[44px]">
        <svg viewBox="0 0 10 10" fill="none" stroke="currentColor" className="w-[10px] h-[10px]"><path d="M0 5.500h10" /></svg>
        <span className="w-[97px] text-center text-[11px] font-bold">Zoom 100%</span>
        <svg viewBox="0 0 11 11" fill="none" stroke="currentColor" className="w-[11px] h-[11px]"><path d="M5.500 0v11M0 5.500h11" /></svg>
      </div>
    </div>
  );
}

export default function App() {
  return (
    <div className="flex flex-col w-[1296px] h-[741px] overflow-hidden bg-[#f1f1f1]">
      <TitleBar />
      <GreenHeader />
      <Ribbon />
      <div className="flex flex-1 min-h-0">
        <LeftBar />
        <div className="flex flex-col w-[996px] shrink-0 min-h-0">
          <FormulaBar />
          <div className="h-[5px] bg-[#f1f1f1] border-b border-[#cbcbcb] shrink-0" />
          <div className="flex flex-1 min-h-0">
            <Grid />
            <ScrollV />
          </div>
          <ScrollH />
        </div>
        <RightPanel />
        <IconBar />
      </div>
      <StatusBar />
    </div>
  );
}
